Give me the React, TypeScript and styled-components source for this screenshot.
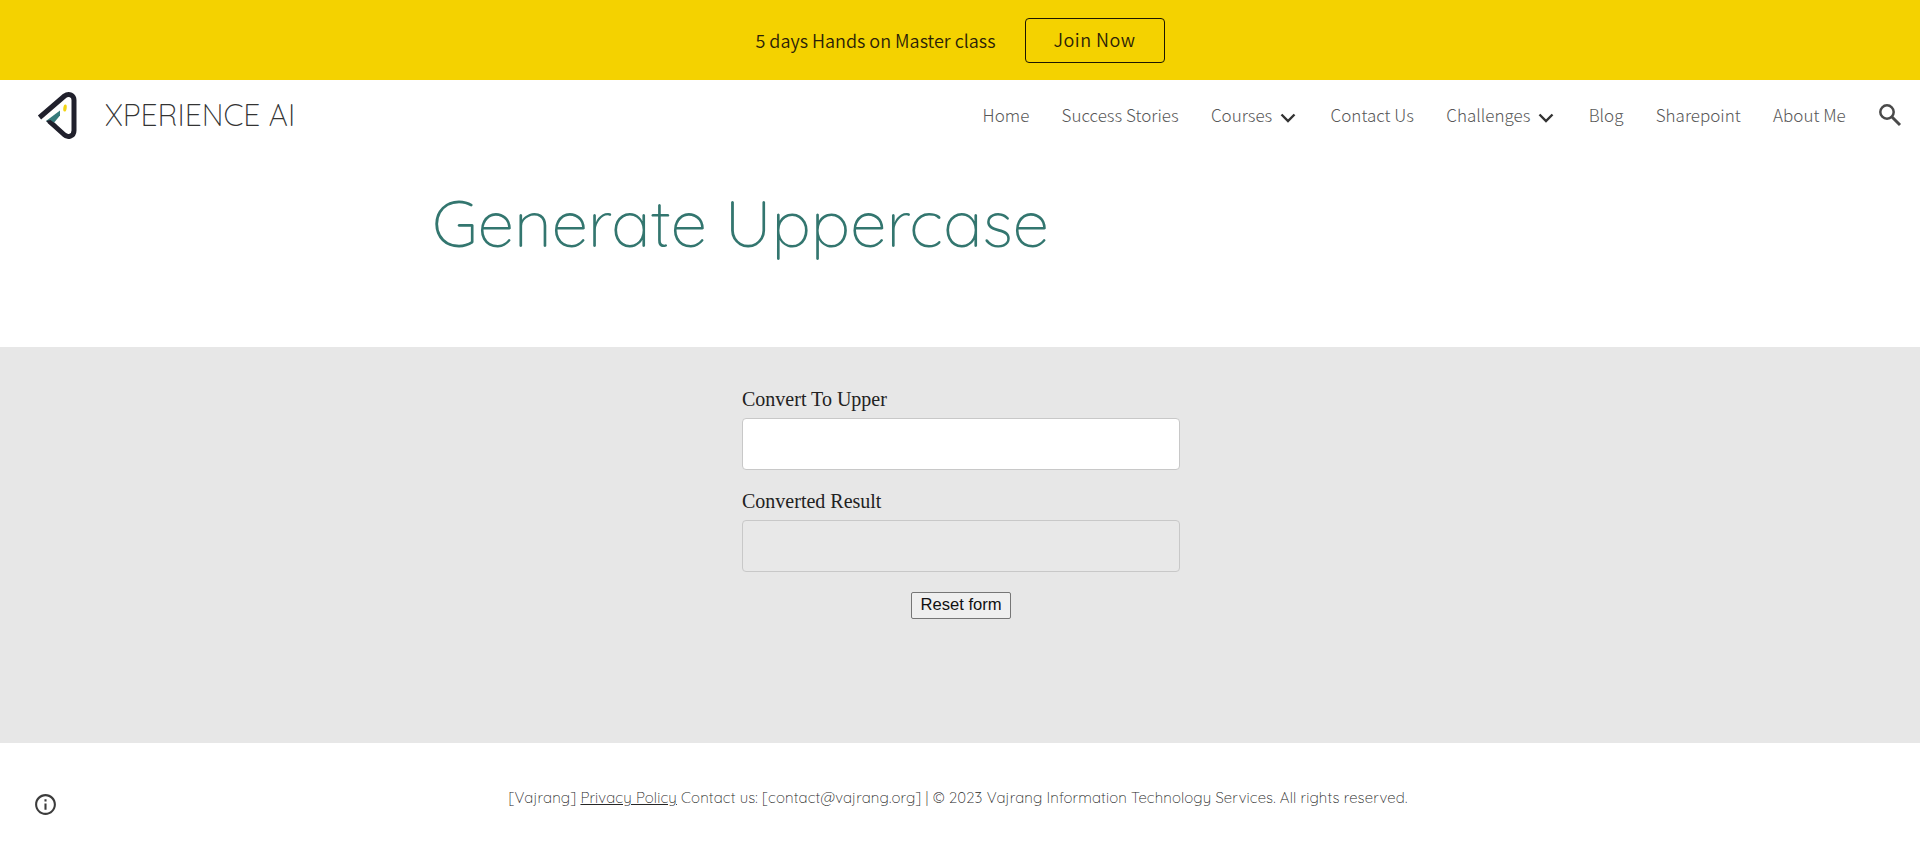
import React from "react";
import styled, { createGlobalStyle } from "styled-components";

const sans = '"Source Sans Pro", "Noto Sans CJK SC", sans-serif';
const round = 'Quicksand, Inter, sans-serif';

const GlobalStyle = createGlobalStyle`
  * { box-sizing: border-box; }
  body { margin: 0; background: #fff; overflow: hidden; }
`;

const Page = styled.div`
  height: 847px;
  display: flex;
  flex-direction: column;
  background: #fff;
`;

const Banner = styled.aside`
  flex: none;
  height: 80px;
  display: flex;
  align-items: center;
  justify-content: center;
  gap: 29px;
  padding-top: 1px;
  background: #f4d200;
  color: #2b2108;
  font: 350 18px/24px ${sans};
`;

const BannerText = styled.span`
  padding-bottom: 1px;
`;

const BannerButton = styled.a`
  width: 140px;
  height: 45px;
  display: flex;
  align-items: center;
  justify-content: center;
  padding-bottom: 3px;
  border: 1px solid #1c1600;
  border-radius: 4px;
  letter-spacing: 0.5px;
`;

const Header = styled.header`
  flex: none;
  height: 72px;
  display: flex;
  align-items: center;
  justify-content: space-between;
  padding: 0 18px 0 36px;
`;

const Brand = styled.div`
  display: flex;
  align-items: center;
  gap: 26px;
`;

const BrandName = styled.span`
  padding-bottom: 3px;
  font: 200 30px/36px Quicksand, Lato, sans-serif;
  color: #333;
`;

const Nav = styled.nav`
  display: flex;
  align-items: center;
  gap: 32.3px;
  padding-bottom: 2px;
  font: 300 17px/24px ${sans};
  color: #585858;
`;

const NavItem = styled.a`
  display: flex;
  align-items: center;
  gap: 8px;
`;

const ChevronIcon = styled.svg`
  margin: 5px 2px 0 0;
`;

const SearchIcon = styled.svg`
  display: block;
`;

const Hero = styled.section`
  flex: none;
  height: 195px;
  padding: 32px 0 0 432px;
`;

const Title = styled.h1`
  margin: 0;
  font: 200 66px/77px ${round};
  font-feature-settings: "cv11";
  letter-spacing: -0.27px;
  color: #33766f;
`;

const FormSection = styled.main`
  flex: none;
  height: 396px;
  display: flex;
  flex-direction: column;
  align-items: center;
  padding-top: 40px;
  background: #e7e7e7;
`;

const Form = styled.form`
  width: 438px;
  display: flex;
  flex-direction: column;
  margin-left: 2px;
`;

const Label = styled.label`
  height: 31px;
  font: 20px/24px "Times New Roman", "Liberation Serif", serif;
  color: #222;
`;

const Input = styled.input<{ $last?: boolean }>`
  height: 52px;
  margin-bottom: ${(p) => (p.$last ? 20 : 19)}px;
  border: 1px solid #c8c8c8;
  border-radius: 4px;
  background: #fff;
  &:disabled { background: #e8e8e8; }
`;

const ResetButton = styled.button`
  align-self: center;
  width: 100px;
  height: 27px;
  padding: 0 0 2px;
  border: 1px solid #767676;
  border-radius: 2px;
  background: #efefef;
  color: #111;
  font: 16.6px/20px Arial, "Liberation Sans", sans-serif;
`;

const Footer = styled.footer`
  flex: 1;
  display: grid;
  grid-template-columns: 508.500px 1fr;
  padding-top: 43px;
`;

const InfoIcon = styled.svg`
  margin: 6px 0 0 33px;
`;

const FooterText = styled.p`
  margin: 0;
  font: 300 15px/24px ${round};
  font-feature-settings: "cv11";
  letter-spacing: 0.12px;
  color: #262626;
  white-space: nowrap;
`;

const PolicyLink = styled.a`
  text-decoration: underline;
`;

const Chevron = () => (
  <ChevronIcon width="16" height="10" viewBox="0 0 16 10" fill="none">
    <path d="M1.500 1.500 8 8l6.500-6.500" stroke="#333" strokeWidth="2.400" />
  </ChevronIcon>
);

const Logo = () => (
  <svg width="43" height="52" viewBox="0 0 43 52" fill="none">
    <path
      d="M3.500 27.500 28.500 6C33 2.500 38 5.500 38 10V40.500C38 46.500 31.500 48 28 44.500L13 31"
      stroke="#20202c"
      strokeWidth="5"
      strokeLinejoin="round"
    />
    <path d="M10 31 24 20.500V25.500L16.500 34.500Z" fill="#357a7b" />
    <path d="m10 31 4.500-1 6 4.500-3 3Z" fill="#20202c" />
    <ellipse cx="29" cy="18" rx="1.700" ry="3.600" fill="#f2d414" transform="rotate(8 29 18)" />
  </svg>
);

const links = [
  { label: "Home" },
  { label: "Success Stories" },
  { label: "Courses", menu: true },
  { label: "Contact Us" },
  { label: "Challenges", menu: true },
  { label: "Blog" },
  { label: "Sharepoint" },
  { label: "About Me" },
];

export default function App() {
  return (
    <Page>
      <GlobalStyle />
      <Banner>
        <BannerText>5 days Hands on Master class</BannerText>
        <BannerButton>Join Now</BannerButton>
      </Banner>
      <Header>
        <Brand>
          <Logo />
          <BrandName>XPERIENCE AI</BrandName>
        </Brand>
        <Nav>
          {links.map((link) => (
            <NavItem key={link.label}>
              {link.label}
              {link.menu && <Chevron />}
            </NavItem>
          ))}
          <SearchIcon width="24" height="24" viewBox="0 0 24 24" fill="none" stroke="#4a4a4a">
            <circle cx="9" cy="9" r="6.700" strokeWidth="2.500" />
            <path d="m14 14 8 8" strokeWidth="3" />
          </SearchIcon>
        </Nav>
      </Header>
      <Hero>
        <Title>Generate Uppercase</Title>
      </Hero>
      <FormSection>
        <Form>
          <Label htmlFor="source">Convert To Upper</Label>
          <Input id="source" />
          <Label htmlFor="result">Converted Result</Label>
          <Input id="result" disabled $last />
          <ResetButton type="reset">Reset form</ResetButton>
        </Form>
      </FormSection>
      <Footer>
        <InfoIcon width="25" height="25" viewBox="0 0 24 24" fill="#3c3c3c">
          <path d="M11 7h2v2h-2zm0 4h2v6h-2zm1-9C6.480 2 2 6.480 2 12s4.480 10 10 10 10-4.480 10-10S17.520 2 12 2zm0 18c-4.410 0-8-3.590-8-8s3.590-8 8-8 8 3.590 8 8-3.590 8-8 8z" />
        </InfoIcon>
        <FooterText>
          [Vajrang] <PolicyLink>Privacy Policy</PolicyLink> Contact us: [contact@vajrang.org] | © 2023 Vajrang Information Technology Services. All rights reserved.
        </FooterText>
      </Footer>
    </Page>
  );
}
